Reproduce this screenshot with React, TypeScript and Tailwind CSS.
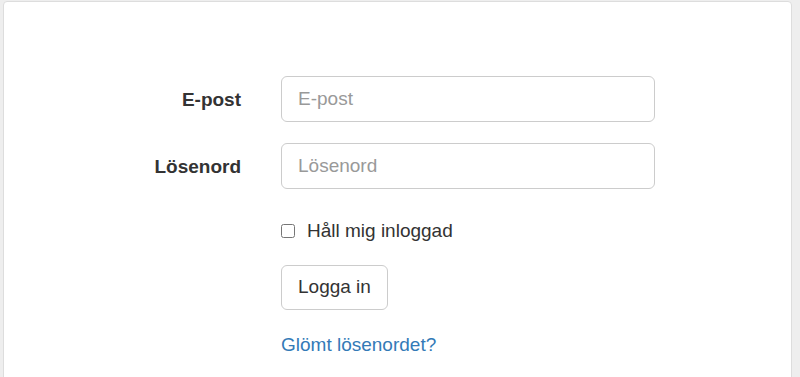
export default function App() {
  return (
    <div
      className="min-h-[377px] overflow-hidden bg-[#eeeeee] pl-[3px] pr-[8px] pt-[1px] text-[#333333]"
      style={{ fontFamily: '"Liberation Sans", Arial, sans-serif' }}
    >
      <div className="h-[390px] rounded-[4px] border border-[#dddddd] bg-white pt-[74px]">
        <form className="flex flex-col" onSubmit={(e) => e.preventDefault()}>
          <div className="flex items-center">
            <label className="w-[237px] text-right text-[19px] font-bold leading-[27px]">E-post</label>
            <input
              type="email"
              placeholder="E-post"
              className="ml-[40px] h-[46px] w-[374px] rounded-[6px] border border-[#cccccc] px-[16px] text-[19px] placeholder:text-[#999999] focus:outline-none"
            />
          </div>
          <div className="mt-[21px] flex items-center">
            <label className="w-[237px] text-right text-[19px] font-bold leading-[27px]">Lösenord</label>
            <input
              type="password"
              placeholder="Lösenord"
              className="ml-[40px] h-[46px] w-[374px] rounded-[6px] border border-[#cccccc] px-[16px] text-[19px] placeholder:text-[#999999] focus:outline-none"
            />
          </div>
          <div className="ml-[277px] mt-[28px] flex items-center">
            <input type="checkbox" className="h-[14px] w-[14px] accent-[#337ab7]" />
            <span className="ml-[12px] text-[19px] leading-[27px]">Håll mig inloggad</span>
          </div>
          <div className="ml-[277px] mt-[21px]">
            <button
              type="submit"
              className="h-[45px] rounded-[6px] border border-[#cccccc] bg-white px-[16px] text-[19px] text-[#333333]"
            >
              Logga in
            </button>
          </div>
          <div className="ml-[277px] mt-[21px]">
            <a href="#" className="text-[19px] leading-[27px] text-[#337ab7]">
              Glömt lösenordet?
            </a>
          </div>
        </form>
      </div>
    </div>
  );
}
